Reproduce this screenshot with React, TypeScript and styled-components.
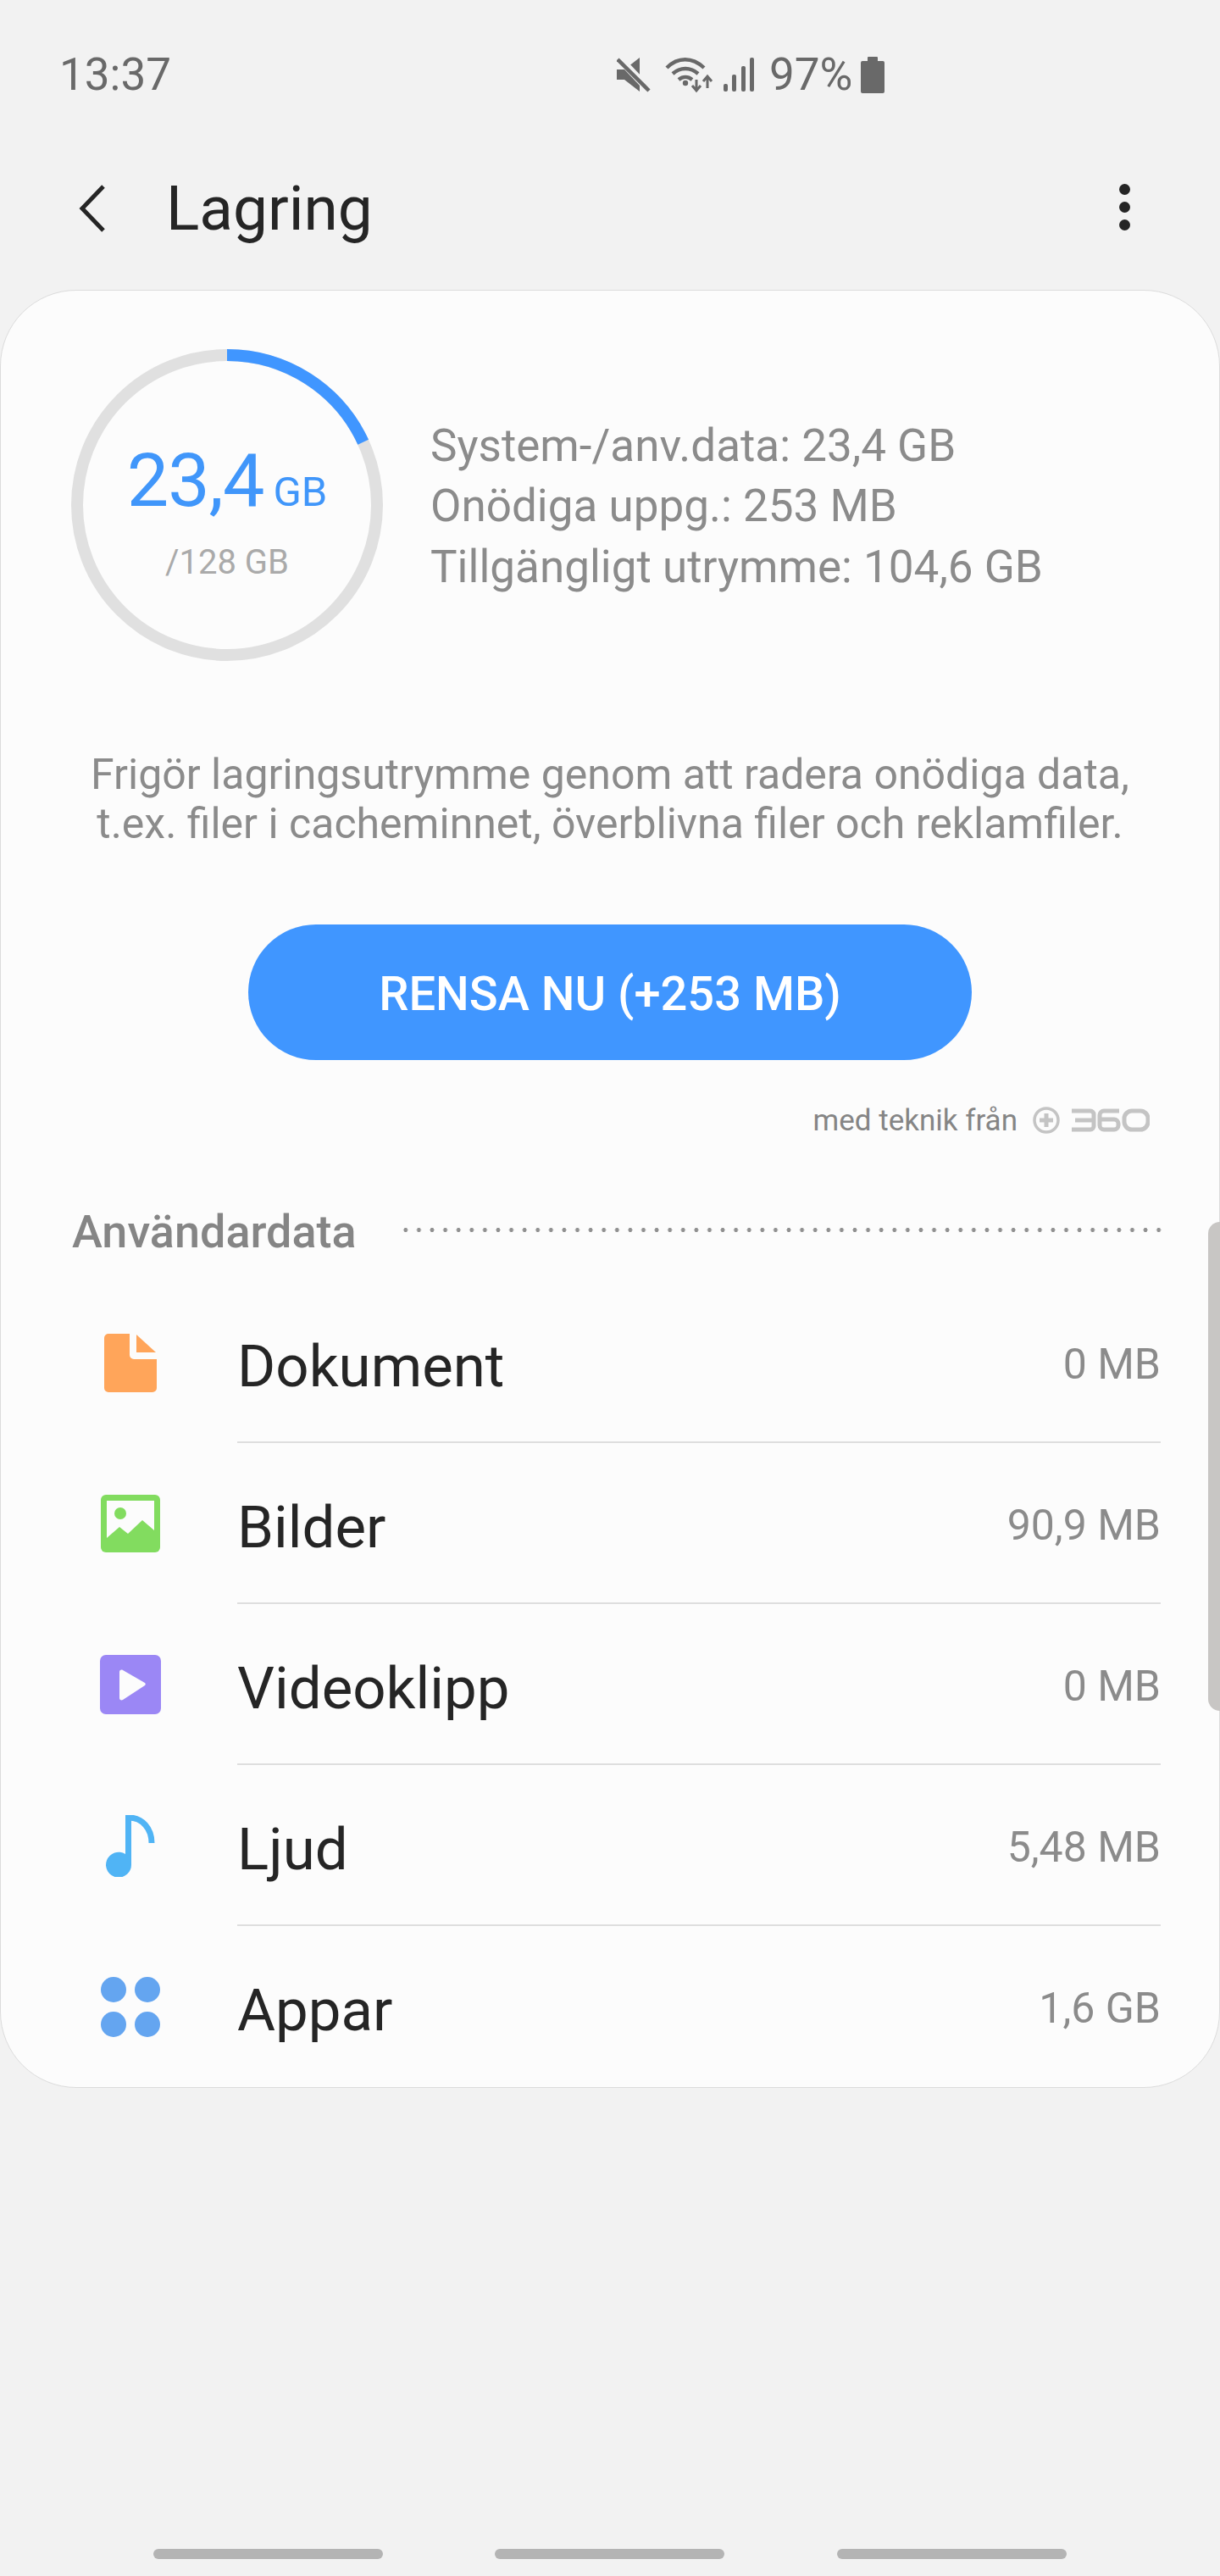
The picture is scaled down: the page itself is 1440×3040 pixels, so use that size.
import React, { FC, ReactNode } from "react";
import styled, { createGlobalStyle } from "styled-components";

const GlobalStyle = createGlobalStyle`
  html, body {
    margin: 0;
    padding: 0;
    background: #f2f2f2;
  }
  * {
    box-sizing: border-box;
  }
`;

const Page = styled.div`
  width: 1440px;
  height: 3040px;
  display: flex;
  flex-direction: column;
  background: #f2f2f2;
  font-family: Roboto, "Liberation Sans", sans-serif;
  overflow: hidden;
`;

const StatusBar = styled.div`
  height: 176px;
  padding-left: 70px;
  display: grid;
  grid-template-columns: 658px auto;
  align-items: center;
  justify-content: start;
  color: #696969;
  font-size: 53px;
`;

const StatusIcons = styled.div`
  display: flex;
  align-items: center;
  height: 60px;
`;

const Percent = styled.span`
  font-size: 53px;
  margin: 0 10px 0 16px;
`;

const Header = styled.header`
  height: 140px;
  padding: 0 106px 0 90px;
  display: flex;
  align-items: center;
  color: #252525;
`;

const Title = styled.h1`
  margin: 0 0 0 68px;
  flex: 1;
  font-size: 73px;
  font-weight: 400;
`;

const MoreDots = styled.div`
  display: grid;
  gap: 8px;
  margin-top: -4px;
  & > i {
    display: block;
    width: 13px;
    height: 13px;
    border-radius: 50%;
    background: #252525;
  }
`;

const Card = styled.main`
  position: relative;
  margin-top: 26px;
  height: 2122px;
  padding-top: 69px;
  background: #fcfcfc;
  border: 1px solid #dcdcdc;
  border-radius: 90px;
`;

const Summary = styled.section`
  display: flex;
  align-items: center;
  gap: 56px;
  padding-left: 83px;
`;

const Ring = styled.div`
  position: relative;
  width: 368px;
  height: 368px;
  flex: none;
`;

const RingText = styled.div`
  position: absolute;
  inset: 0;
  display: flex;
  flex-direction: column;
  align-items: center;
`;

const UsedLine = styled.div`
  margin-top: 109px;
  height: 92px;
  display: flex;
  align-items: baseline;
  color: #4096fa;
  font-size: 88px;
  line-height: 92px;
  letter-spacing: -1px;
`;

const UsedUnit = styled.span`
  margin-left: 11px;
  font-size: 49px;
  letter-spacing: 0;
`;

const TotalLine = styled.div`
  margin-top: 27px;
  color: #aaaaaa;
  font-size: 40px;
  line-height: 48px;
`;

const InfoList = styled.div`
  margin-top: 4px;
  color: #8b8b8b;
  font-size: 53px;
  line-height: 71.5px;
`;

const Blurb = styled.p`
  margin: 105px 0 0;
  text-align: center;
  color: #8b8b8b;
  font-size: 50px;
  line-height: 58px;
`;

const CleanButton = styled.button`
  display: block;
  width: 854px;
  height: 160px;
  margin: 90px auto 0;
  padding-top: 4px;
  border: 0;
  border-radius: 80px;
  background: #4096ff;
  color: #ffffff;
  font-family: inherit;
  font-size: 56px;
  font-weight: 500;
`;

const PoweredBy = styled.div`
  height: 40px;
  margin-top: 51px;
  padding-right: 82px;
  display: flex;
  justify-content: flex-end;
  align-items: center;
  gap: 18px;
  color: #858585;
  font-size: 35px;
`;

const SectionHead = styled.div`
  height: 50px;
  margin-top: 86px;
  padding: 0 64px 0 84px;
  display: flex;
  align-items: center;
  gap: 50px;
  color: #858585;
  font-size: 54px;
  font-weight: 500;
`;

const DottedRule = styled.div`
  flex: 1;
  height: 5px;
  margin-top: -4px;
  background-image: radial-gradient(circle, #909090 2.4px, transparent 2.6px);
  background-size: 15.6px 5px;
  background-repeat: repeat-x;
`;

const CategoryList = styled.ul`
  margin: 35px 0 0;
  padding: 0 69px 0 0;
  list-style: none;
`;

const CategoryRow = styled.li<{ $last?: boolean }>`
  height: 190px;
  display: grid;
  grid-template-columns: 280px 1fr auto;
  align-items: center;
  position: relative;
  &::after {
    content: "";
    display: ${p => (p.$last ? "none" : "block")};
    position: absolute;
    left: 279px;
    right: 0;
    bottom: 0;
    height: 2px;
    background: #dedede;
  }
`;

const IconCell = styled.div`
  width: 140px;
  margin-left: 83px;
  display: flex;
  justify-content: center;
`;

const CategoryName = styled.span`
  padding-top: 8px;
  margin-left: -1px;
  color: #252525;
  font-size: 69px;
`;

const CategorySize = styled.span`
  padding-top: 4px;
  color: #8b8b8b;
  font-size: 50px;
`;

const ScrollThumb = styled.div`
  position: absolute;
  right: -1px;
  top: 1099px;
  width: 14px;
  height: 577px;
  background: #c8c6c4;
  border-radius: 14px 0 0 14px;
`;

const NavHints = styled.nav`
  margin-top: auto;
  padding: 0 115px 20px;
  display: grid;
  grid-template-columns: repeat(3, 1fr);
  justify-items: center;
`;

const NavHint = styled.div`
  width: 271px;
  height: 12px;
  border-radius: 6px;
  background: #b4b4b4;
`;

const MuteIcon = () => (
  <svg width="40" height="42" viewBox="0 0 40 42">
    <path d="M0 15h9L27 1v40L9 27H0z" fill="#696969" />
    <path d="M2 1l37 39" stroke="#f2f2f2" strokeWidth="9" />
    <path d="M1 3l37 37" stroke="#696969" strokeWidth="4.5" />
  </svg>
);

const WifiIcon = () => (
  <svg width="58" height="44" viewBox="0 0 58 44" style={{ marginLeft: 17 }}>
    <g fill="none" stroke="#696969" strokeWidth="4.4">
      <path d="M2 14C15 1 32 1 46 14" />
      <path d="M9 21c9-8 21-8 30 0" />
      <path d="M16 28c5-4 11-4 16 0" />
    </g>
    <circle cx="24" cy="32" r="3.2" fill="#696969" />
    <path d="M37 28v11M32 35l5 6 5-6" fill="none" stroke="#696969" strokeWidth="3" />
    <path d="M50 38V25M45 30l5-6 5 6" fill="none" stroke="#696969" strokeWidth="3" />
  </svg>
);

const SignalIcon = () => (
  <svg width="38" height="40" viewBox="0 0 38 40" style={{ marginLeft: 11 }}>
    <g fill="#696969">
      <rect x="0" y="31" width="5" height="9" rx="2" />
      <rect x="10" y="20" width="5" height="20" rx="2" />
      <rect x="21" y="10" width="5" height="30" rx="2" />
      <rect x="31" y="0" width="5" height="40" rx="2" />
    </g>
  </svg>
);

const BatteryIcon = () => (
  <svg width="28" height="44" viewBox="0 0 28 44">
    <path d="M8 2a1 1 0 0 1 1-1h10a1 1 0 0 1 1 1v4h6a2 2 0 0 1 2 2v34a2 2 0 0 1-2 2H2a2 2 0 0 1-2-2V8a2 2 0 0 1 2-2h6z" fill="#696969" />
  </svg>
);

const BackIcon = () => (
  <svg width="38" height="58" viewBox="0 0 38 58">
    <path d="M32 3L7 29l25 26" fill="none" stroke="#252525" strokeWidth="5" />
  </svg>
);

const UsageRing = () => (
  <svg width="368" height="368" viewBox="0 0 368 368">
    <circle cx="184" cy="184" r="177" fill="none" stroke="#e0e0e0" strokeWidth="14" />
    <circle
      cx="184"
      cy="184"
      r="177"
      fill="none"
      stroke="#4096ff"
      strokeWidth="14"
      strokeDasharray={`${2 * Math.PI * 177 * 0.181} ${2 * Math.PI * 177}`}
      transform="rotate(-90 184 184)"
    />
  </svg>
);

const Logo360 = () => (
  <svg width="138" height="34" viewBox="0 0 138 34">
    <circle cx="16" cy="17" r="14" fill="none" stroke="#c4c4c4" strokeWidth="3.5" />
    <path d="M16 9v16M8 17h16" stroke="#c4c4c4" strokeWidth="5" />
    <g fill="none" stroke="#c4c4c4" strokeWidth="5">
      <path d="M46 6h22a4 4 0 0 1 4 4v14a4 4 0 0 1-4 4H46M50 17h20" />
      <path d="M102 6H84a5 5 0 0 0-5 5v12a5 5 0 0 0 5 5h12a5 5 0 0 0 5-5v-2a5 5 0 0 0-5-5H80" />
      <rect x="108" y="6" width="28" height="22" rx="9" />
    </g>
  </svg>
);

const DocIcon = () => (
  <svg width="62" height="69" viewBox="0 0 62 69">
    <path d="M5 0h25v25a5 5 0 0 0 5 5h27v34a5 5 0 0 1-5 5H5a5 5 0 0 1-5-5V5a5 5 0 0 1 5-5z" fill="#ffa55a" />
    <path d="M38 1l23 21H38z" fill="#ffa55a" />
  </svg>
);

const ImageIcon = () => (
  <svg width="70" height="68" viewBox="0 0 70 68">
    <rect width="70" height="68" rx="6" fill="#82dc5f" />
    <path d="M7 7h56v35L49 30 32 46 22 38 7 51z" fill="#fcfcfc" />
    <circle cx="23" cy="22" r="7" fill="#82dc5f" />
  </svg>
);

const VideoIcon = () => (
  <svg width="72" height="70" viewBox="0 0 72 70">
    <rect width="72" height="70" rx="7" fill="#9b87f5" />
    <path d="M23 20c0-2 2-3 4-2l26 15c1 1 1 2 0 3L27 53c-2 1-4 0-4-2z" fill="#fcfcfc" />
  </svg>
);

const NoteIcon = () => (
  <svg width="58" height="73" viewBox="0 0 58 73">
    <path d="M23 3h4c16 0 27 13 27 30" fill="none" stroke="#50b4f5" strokeWidth="7" />
    <path d="M23 0h7v58a15 15 0 1 1-7-12z" fill="#50b4f5" />
  </svg>
);

const AppsIcon = () => (
  <svg width="70" height="71" viewBox="0 0 70 71">
    <g fill="#64a5f0">
      <circle cx="15" cy="15" r="15" />
      <circle cx="55" cy="15" r="15" />
      <circle cx="15" cy="56" r="15" />
      <circle cx="55" cy="56" r="15" />
    </g>
  </svg>
);

interface Category {
  name: string;
  size: string;
  icon: ReactNode;
}

const categories: Category[] = [
  { name: "Dokument", size: "0 MB", icon: <DocIcon /> },
  { name: "Bilder", size: "90,9 MB", icon: <ImageIcon /> },
  { name: "Videoklipp", size: "0 MB", icon: <VideoIcon /> },
  { name: "Ljud", size: "5,48 MB", icon: <NoteIcon /> },
  { name: "Appar", size: "1,6 GB", icon: <AppsIcon /> },
];

const App: FC = () => (
  <Page>
    <GlobalStyle />
    <StatusBar>
      <span>13:37</span>
      <StatusIcons>
        <MuteIcon />
        <WifiIcon />
        <SignalIcon />
        <Percent>97%</Percent>
        <BatteryIcon />
      </StatusIcons>
    </StatusBar>
    <Header>
      <BackIcon />
      <Title>Lagring</Title>
      <MoreDots>
        <i />
        <i />
        <i />
      </MoreDots>
    </Header>
    <Card>
      <Summary>
        <Ring>
          <UsageRing />
          <RingText>
            <UsedLine>
              23,4
              <UsedUnit>GB</UsedUnit>
            </UsedLine>
            <TotalLine>/128 GB</TotalLine>
          </RingText>
        </Ring>
        <InfoList>
          <div>System-/anv.data: 23,4 GB</div>
          <div>Onödiga uppg.: 253 MB</div>
          <div>Tillgängligt utrymme: 104,6 GB</div>
        </InfoList>
      </Summary>
      <Blurb>
        Frigör lagringsutrymme genom att radera onödiga data,
        <br />
        t.ex. filer i cacheminnet, överblivna filer och reklamfiler.
      </Blurb>
      <CleanButton>RENSA NU (+253 MB)</CleanButton>
      <PoweredBy>
        <span>med teknik från</span>
        <Logo360 />
      </PoweredBy>
      <SectionHead>
        <span>Användardata</span>
        <DottedRule />
      </SectionHead>
      <CategoryList>
        {categories.map((category, index) => (
          <CategoryRow key={category.name} $last={index === categories.length - 1}>
            <IconCell>{category.icon}</IconCell>
            <CategoryName>{category.name}</CategoryName>
            <CategorySize>{category.size}</CategorySize>
          </CategoryRow>
        ))}
      </CategoryList>
      <ScrollThumb />
    </Card>
    <NavHints>
      <NavHint />
      <NavHint />
      <NavHint />
    </NavHints>
  </Page>
);

export default App;
